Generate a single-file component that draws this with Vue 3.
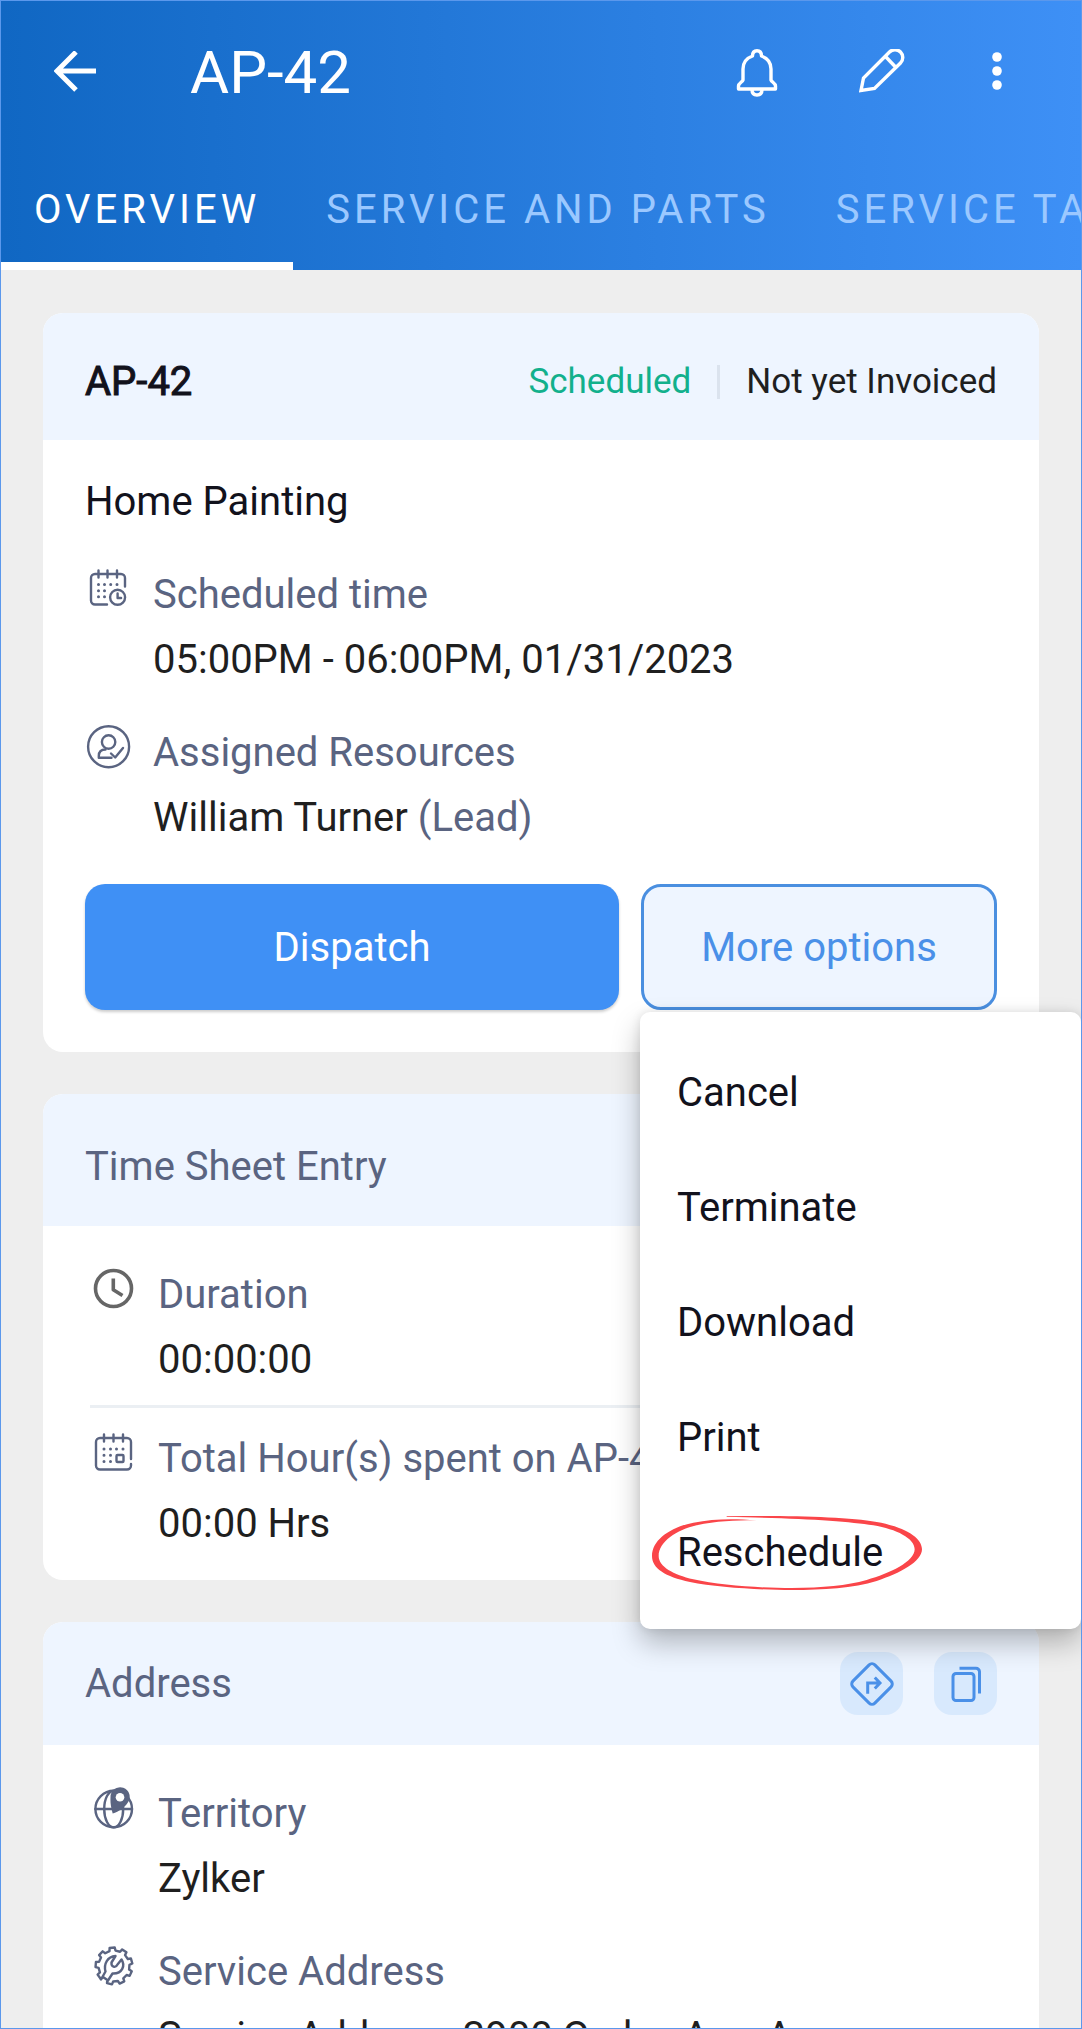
<script setup>
import { ref } from 'vue'

const tabs = ['OVERVIEW', 'SERVICE AND PARTS', 'SERVICE TASKS']
const activeTab = ref(0)
const menuOpen = ref(true)
const menuItems = ['Cancel', 'Terminate', 'Download', 'Print', 'Reschedule']

// Outline of a toothed wheel centred on (cx, cy)
function gearOutline(cx, cy, inner, outer, teeth) {
  const step = (Math.PI * 2) / teeth
  const point = (r, a) => `${(cx + r * Math.cos(a)).toFixed(2)} ${(cy + r * Math.sin(a)).toFixed(2)}`
  const parts = []
  for (let i = 0; i < teeth; i++) {
    const a = i * step - Math.PI / 2 - 0.1
    parts.push(point(inner, a - step * 0.28), point(outer, a - step * 0.2), point(outer, a + step * 0.2), point(inner, a + step * 0.28))
  }
  return `M${parts.join('L')}Z`
}
const gear = gearOutline(24, 24, 15.5, 18.5, 9)
</script>

<template>
  <div class="screen">
    <header class="app-bar">
      <div class="title-row">
        <button class="icon-button" aria-label="Back">
          <svg width="42" height="42" viewBox="0 0 42 42" fill="none" stroke="currentColor" stroke-width="5">
            <path d="M42 20H4M22 1L3 20l19 19" />
          </svg>
        </button>
        <h1>AP-42</h1>
        <div class="actions">
          <button class="icon-button" aria-label="Notifications">
            <svg width="46" height="50" viewBox="0 0 46 50" fill="none" stroke="currentColor" stroke-width="3.4" stroke-linejoin="round">
              <path d="M18.500 9C18.500 5.500 20 3.700 23 3.700S27.500 5.500 27.500 9C33 11 37 15.500 37 22V33C37.500 35 41.500 36 41.500 39V42H4.500V39C4.500 36 8.500 35 9 33V22C9 15.500 13 11 18.500 9Z" />
              <path d="M18 42.500C18 46 20 48 23 48S28 46 28 42.500" />
            </svg>
          </button>
          <button class="icon-button" aria-label="Edit">
            <svg width="46" height="46" viewBox="0 0 46 46" fill="none" stroke="currentColor" stroke-width="3.4">
              <path d="M2 41.500L4.500 29 30.500 3A7.500 7.500 0 0 1 41.500 14L15.500 39.500Z" />
              <path d="M26.500 7.500L37 18.500" />
            </svg>
          </button>
          <button class="icon-button" aria-label="More">
            <svg width="26" height="42" viewBox="0 0 26 42" fill="currentColor">
              <circle cx="13" cy="6" r="4.800" /><circle cx="13" cy="20" r="4.800" /><circle cx="13" cy="34" r="4.800" />
            </svg>
          </button>
        </div>
      </div>
      <nav class="tabs">
        <button v-for="(tab, i) in tabs" :key="tab" class="tab" :class="{ active: i === activeTab }" @click="activeTab = i">{{ tab }}</button>
      </nav>
    </header>

    <main>
      <section class="card">
        <div class="card-head summary-head">
          <h2 class="strong">AP-42</h2>
          <div class="status">
            <span class="scheduled">Scheduled</span>
            <span class="bar"></span>
            <span class="invoice">Not yet Invoiced</span>
          </div>
        </div>
        <div class="card-body summary-body">
          <p class="subject">Home Painting</p>
          <div class="field">
            <svg class="field-icon" viewBox="0 0 48 48" stroke-width="2.4">
              <path d="M22 39.500H10a4 4 0 0 1-4-4V13a4 4 0 0 1 4-4H36a4 4 0 0 1 4 4V21.500" />
              <path d="M13.500 5.500V12.500M22.500 5.500V12.500M32 5.500V12.500" />
              <path class="dots" d="M13.500 19.500h0M19.500 19.500h0M25.700 19.500h0M32 19.500h0M13.500 25.700h0M19.500 25.700h0M13.500 31.700h0M19.500 31.700h0" />
              <circle cx="32.600" cy="32.300" r="7.500" />
              <path d="M32.600 28.500V33h3.500" />
            </svg>
            <dl>
              <dt>Scheduled time</dt>
              <dd>05:00PM - 06:00PM, 01/31/2023</dd>
            </dl>
          </div>
          <div class="field">
            <svg class="field-icon" viewBox="0 0 48 48" stroke-width="2.4">
              <circle cx="23.600" cy="23.700" r="20.500" />
              <circle cx="23.600" cy="19" r="6.700" />
              <path d="M20.500 26.500C16 26.500 13.800 29 13.800 33V34.700H26.500" />
              <path d="M26 30.500L30.200 34.500 38 25" />
            </svg>
            <dl>
              <dt>Assigned Resources</dt>
              <dd>William Turner <span class="muted">(Lead)</span></dd>
            </dl>
          </div>
          <div class="buttons">
            <button class="primary">Dispatch</button>
            <div class="menu-anchor">
              <button class="secondary" aria-haspopup="menu" :aria-expanded="menuOpen" @click="menuOpen = !menuOpen">More options</button>
              <div v-if="menuOpen" class="menu" role="menu">
                <button v-for="item in menuItems" :key="item" class="menu-item" role="menuitem">
                  {{ item }}
                  <svg v-if="item === 'Reschedule'" class="ring" viewBox="150 222 822 234" width="274" height="78" aria-hidden="true">
                    <path d="M380 229C560 226 740 230 830 246C920 262 966 295 966 328C966 365 900 400 830 423C760 445 670 450 575 450C480 450 350 442 270 426C195 410 156 385 156 348C156 300 210 262 280 248C340 236 400 235 470 241C400 241 350 243 290 256C230 270 176 305 176 348C176 380 220 404 280 418C360 436 480 444 575 444C670 443 740 437 800 420C870 400 944 365 944 328C944 295 890 268 820 256C740 243 600 234 380 231Z" />
                  </svg>
                </button>
              </div>
            </div>
          </div>
        </div>
      </section>

      <section class="card">
        <div class="card-head sheet-head">
          <h2>Time Sheet Entry</h2>
        </div>
        <div class="card-body sheet-body">
          <div class="field">
            <svg class="field-icon clock" viewBox="0 0 48 48" stroke-width="3.6">
              <circle cx="23.500" cy="23.500" r="18" />
              <path d="M23.300 13.500V24.700L32.500 30.500" />
            </svg>
            <dl>
              <dt>Duration</dt>
              <dd>00:00:00</dd>
            </dl>
          </div>
          <hr />
          <div class="field">
            <svg class="field-icon" viewBox="0 0 48 48" stroke-width="2.4">
              <path d="M41 30V13a4 4 0 0 0-4-4H10a4 4 0 0 0-4 4V36.500a4 4 0 0 0 4 4H37a4 4 0 0 0 4-4V35" />
              <path d="M14 5.500V12.500M23.500 5.500V12.500M33 5.500V12.500" />
              <path class="dots" d="M14 20h0M20.500 20h0M26.500 20h0M33 20h0M14 26.200h0M20.500 26.200h0M14 32.500h0M20.500 32.500h0" />
              <rect x="26.500" y="26" width="7" height="7" rx="1" />
            </svg>
            <dl>
              <dt>Total Hour(s) spent on AP-42</dt>
              <dd>00:00 Hrs</dd>
            </dl>
          </div>
        </div>
      </section>

      <section class="card">
        <div class="card-head address-head">
          <h2>Address</h2>
          <div class="head-actions">
            <button class="tile" aria-label="Directions">
              <svg viewBox="-22 -22 44 44">
                <rect x="-15.500" y="-15.500" width="31" height="31" rx="4" transform="rotate(45)" />
                <path d="M-4.300 9.700V-1H7M2.800-6.500L8-1 2.800 4.500" />
              </svg>
            </button>
            <button class="tile" aria-label="Copy address">
              <svg viewBox="-22 -22 44 44">
                <rect x="-13" y="-10.500" width="21" height="27" rx="3" />
                <path d="M-6.500-15.700H10a3.500 3.500 0 0 1 3.500 3.500V9.500" />
              </svg>
            </button>
          </div>
        </div>
        <div class="card-body sheet-body">
          <div class="field">
            <svg class="field-icon" viewBox="0 0 48 48" stroke-width="2.4">
              <circle cx="23.700" cy="25" r="18.300" />
              <ellipse cx="23.700" cy="25" rx="9.500" ry="18.300" />
              <path d="M5.400 25H42" />
              <path class="pin" d="M22.700 29.500C20.500 22 20.300 17.500 20.500 13A9.600 9.600 0 1 1 37.500 19C34.500 23.500 29 27.500 22.700 29.500Z" />
              <circle class="pin-hole" cx="30" cy="13.300" r="4.300" />
            </svg>
            <dl>
              <dt>Territory</dt>
              <dd>Zylker</dd>
            </dl>
          </div>
          <div class="field">
            <svg class="field-icon" viewBox="0 0 48 48" stroke-width="2.4">
              <path :d="gear" />
              <path d="M11 37.500L15.500 29.500C13.500 22 17.500 14.500 25.500 14L21.500 20.500C21 25 25.500 26.500 27.500 22.500L31.500 17.500C35.500 23.500 32.500 32 22.500 31.500L18 38.500" />
            </svg>
            <dl>
              <dt>Service Address</dt>
              <dd>Service Address, 3900 Cedar, Ave, A</dd>
            </dl>
          </div>
        </div>
      </section>
    </main>
  </div>
</template>

<style>
body {
  margin: 0;
}
</style>

<style scoped>
.screen {
  box-sizing: border-box;
  height: 100vh;
  overflow: hidden;
  border: 1px solid #5b98ec;
  background: #eeeeee;
  color: #1f1f1f;
  font: 400 40px/65px Roboto, "Liberation Sans", sans-serif;
}
h1, h2, p, dl, dd {
  margin: 0;
  font-size: 40px;
  font-weight: 400;
}
button {
  margin: 0;
  padding: 0;
  border: 0;
  background: none;
  color: inherit;
  font: inherit;
  cursor: pointer;
}
svg {
  display: block;
}
.app-bar {
  background: linear-gradient(90deg, #1067c3, #3e90f6);
  color: #fff;
}
.title-row {
  display: flex;
  align-items: center;
  height: 142px;
  padding: 0 71px 0 53px;
}
.title-row h1 {
  margin-left: 94px;
  font-size: 60px;
}
.actions {
  display: flex;
  align-items: center;
  gap: 79px;
  margin-left: auto;
}
.tabs {
  display: flex;
  overflow: hidden;
}
.tab {
  flex: none;
  padding: 34px 33px 20px;
  border-bottom: 8px solid transparent;
  color: #9bc8ff;
  letter-spacing: 4px;
}
.tab.active {
  border-color: #fff;
  color: #fff;
}
main {
  display: flex;
  flex-direction: column;
  gap: 42px;
  padding: 43px 42px;
}
.card {
  border-radius: 20px;
  background: #fff;
}
.card-head {
  display: flex;
  justify-content: space-between;
  align-items: center;
  border-radius: 20px 20px 0 0;
  background: #eef5ff;
  color: #5a6481;
}
.summary-head {
  padding: 36px 42px 26px;
}
.sheet-head {
  padding: 40px 42px 27px;
}
.address-head {
  padding: 29px 42px;
}
.strong {
  color: #12121c;
  -webkit-text-stroke: 1px #12121c;
}
.status {
  display: flex;
  align-items: center;
  gap: 26px;
  font-size: 35px;
}
.scheduled {
  color: #12b08c;
}
.invoice {
  color: #1f1f1f;
}
.bar {
  width: 3px;
  height: 34px;
  background: #dbe3ee;
}
.card-body {
  display: flex;
  flex-direction: column;
  gap: 28px;
}
.summary-body {
  padding: 29px 42px 42px;
}
.sheet-body {
  padding: 36px 47px 24px;
}
.subject {
  color: #12121c;
}
.field {
  display: flex;
  gap: 20px;
}
.field-icon {
  flex: none;
  width: 48px;
  height: 48px;
  margin-top: 3px;
  fill: none;
  stroke: #5a6481;
  stroke-linecap: round;
  stroke-linejoin: round;
}
.field-icon .dots {
  stroke-width: 3;
}
.field-icon.clock {
  stroke: #666;
  stroke-linecap: butt;
}
.field-icon .pin {
  fill: #5a6481;
  stroke: none;
}
.field-icon .pin-hole {
  fill: #fff;
  stroke: none;
}
dt, .muted {
  color: #5a6481;
}
.sheet-body hr {
  align-self: stretch;
  height: 3px;
  margin: -15px 0 -10px;
  border: 0;
  background: #ebeff3;
}
.buttons {
  display: flex;
  gap: 22px;
  margin-top: 6px;
}
.primary {
  flex: 3 1 0;
  height: 126px;
  border-radius: 20px;
  background: #3f90f5;
  box-shadow: 0 2px 3px rgba(0, 0, 0, 0.2);
  color: #fff;
}
.menu-anchor {
  position: relative;
  flex: 2 1 0;
}
.secondary {
  width: 100%;
  height: 126px;
  border: 3px solid #4a8fe0;
  border-radius: 20px;
  background: #eef5ff;
  color: #4a90e8;
}
.menu {
  position: absolute;
  z-index: 2;
  top: 128px;
  right: -84px;
  left: -1px;
  padding: 23px 0 19px;
  border-radius: 10px;
  background: #fff;
  box-shadow: 0 14px 28px rgba(0, 0, 0, 0.26), 0 0 10px rgba(0, 0, 0, 0.1);
}
.menu-item {
  position: relative;
  display: block;
  width: 100%;
  height: 115px;
  padding-left: 37px;
  color: #12121c;
  text-align: left;
}
.ring {
  position: absolute;
  top: 19px;
  left: 10px;
  fill: #fa4549;
}
.head-actions {
  display: flex;
  gap: 31px;
}
.tile {
  display: grid;
  place-items: center;
  width: 63px;
  height: 63px;
  border-radius: 18px;
  background: #d8e9fd;
}
.tile svg {
  width: 44px;
  height: 44px;
  fill: none;
  stroke: #4a90e8;
  stroke-width: 3;
}
</style>
